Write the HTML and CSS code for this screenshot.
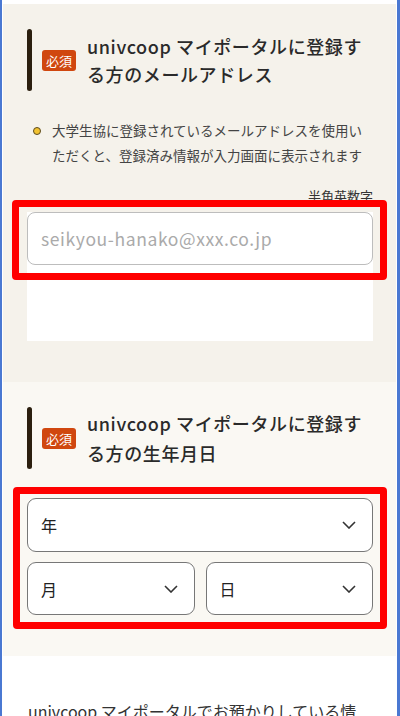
FILE: index.html
```html
<!DOCTYPE html>
<html lang="ja">
<head>
    <meta charset="UTF-8">
    <meta name="viewport" content="width=device-width, initial-scale=1.0">
    <title>会員登録</title>
    <link rel="stylesheet" href="styles.css">
</head>
<body>
    <div class="frame">
        <!-- メールアドレス -->
        <section class="block block-mail">
            <div class="heading">
                <span class="bar"></span>
                <span class="badge">必須</span>
                <h2 class="title">univcoop マイポータルに登録する方のメールアドレス</h2>
            </div>
            <ul class="notes">
                <li>大学生協に登録されているメールアドレスを使用いただくと、登録済み情報が入力画面に表示されます</li>
            </ul>
            <div class="hint">半角英数字</div>
            <div class="field">
                <div class="mark mark-mail"></div>
                <input class="text-input" type="email" placeholder="seikyou-hanako@xxx.co.jp">
                <div class="field-space"></div>
            </div>
        </section>

        <!-- 生年月日 -->
        <section class="block block-birth">
            <div class="heading">
                <span class="bar"></span>
                <span class="badge">必須</span>
                <h2 class="title">univcoop マイポータルに登録する方の生年月日</h2>
            </div>
            <div class="selects">
                <div class="mark mark-birth"></div>
                <div class="select wide">
                    <span>年</span>
                    <svg class="chev" width="14" height="8" viewBox="0 0 14 8"><path d="M1 1l6 6 6-6" fill="none" stroke="#333" stroke-width="1.6"/></svg>
                </div>
                <div class="select">
                    <span>月</span>
                    <svg class="chev" width="14" height="8" viewBox="0 0 14 8"><path d="M1 1l6 6 6-6" fill="none" stroke="#333" stroke-width="1.6"/></svg>
                </div>
                <div class="select">
                    <span>日</span>
                    <svg class="chev" width="14" height="8" viewBox="0 0 14 8"><path d="M1 1l6 6 6-6" fill="none" stroke="#333" stroke-width="1.6"/></svg>
                </div>
            </div>
        </section>

        <section class="block block-info">
            <p>univcoop マイポータルでお預かりしている情報は、以下の目的で利用いたします。</p>
        </section>
    </div>
</body>
</html>
```

FILE: styles.css
```css
* {
    box-sizing: border-box;
}
body {
    margin: 0;
    font-family: "Noto Sans CJK JP", "Noto Sans", sans-serif;
    color: #333;
    background: #fff;
    overflow: hidden;
}
.frame {
    width: 400px;
    height: 716px;
    border-left: 2px solid #4a78d2;
    border-right: 3px solid #4a78d2;
    padding: 4px 1px 0 1px;
    overflow: hidden;
}
.block {
    padding: 25px 23px 41px 24px;
}
.block-mail {
    background: #f5f2eb;
}
.block-birth {
    background: #faf8f3;
    padding-bottom: 41px;
}
.block-info {
    background: #fff;
    padding-top: 41px;
}
.heading {
    display: flex;
    align-items: center;
}
.bar {
    flex: none;
    width: 5px;
    height: 62px;
    border-radius: 3px;
    background: #2b1f0f;
}
.badge {
    flex: none;
    margin-left: 10px;
    width: 34px;
    height: 21px;
    border-radius: 3px;
    background: #d0470f;
    color: #fff;
    font-size: 13px;
    line-height: 21px;
    text-align: center;
}
.title {
    margin: 0 0 0 11px;
    max-width: 278px;
    font-size: 18px;
    font-weight: 500;
    line-height: 28px;
    letter-spacing: 0.6px;
    color: #2a2a2a;
}
.block-birth .title {
    line-height: 30px;
}
.notes {
    list-style: none;
    margin: 27px 0 0 0;
    padding: 0 0 0 25px;
}
.notes li {
    position: relative;
    font-size: 13.5px;
    line-height: 25px;
    color: #444;
}
.notes li::before {
    content: "";
    position: absolute;
    left: -19px;
    top: 9px;
    width: 6px;
    height: 6px;
    border-radius: 50%;
    background: #f2c230;
    border: 1px solid #5a4a20;
}
.hint {
    margin-top: 19px;
    text-align: right;
    font-size: 13px;
    line-height: 18px;
    color: #333;
}
.field {
    position: relative;
    margin-top: 7px;
    background: #fff;
}
.text-input {
    display: block;
    width: 100%;
    height: 53px;
    padding: 0 13px;
    border: 1px solid #bdbdbd;
    border-radius: 8px;
    background: #fff;
    font-family: inherit;
    font-size: 17.5px;
    letter-spacing: 0.6px;
    color: #333;
}
.text-input::placeholder {
    color: #aaa;
}
.field-space {
    height: 76px;
}
.mark {
    position: absolute;
    border: 7px solid #ff0000;
    border-radius: 4px;
    z-index: 2;
    pointer-events: none;
}
.mark-mail {
    top: -12px;
    left: -15px;
    right: -14px;
    height: 80px;
}
.selects {
    position: relative;
    margin-top: 29px;
    display: grid;
    grid-template-columns: 1fr 1fr;
    gap: 10px 11px;
}
.mark-birth {
    top: -11px;
    left: -14px;
    right: -14px;
    bottom: -14px;
}
.select {
    height: 53px;
    border: 1px solid #777;
    border-radius: 9px;
    background: #fff;
    display: flex;
    align-items: center;
    justify-content: space-between;
    padding: 0 16px 0 13px;
    font-size: 16px;
    color: #222;
}
.select.wide {
    grid-column: 1 / 3;
    height: 54px;
}
.chev {
    display: block;
}
.block-info p {
    margin: 0;
    max-width: 335px;
    font-size: 16px;
    line-height: 28px;
    color: #333;
    padding-left: 1px;
}
```
